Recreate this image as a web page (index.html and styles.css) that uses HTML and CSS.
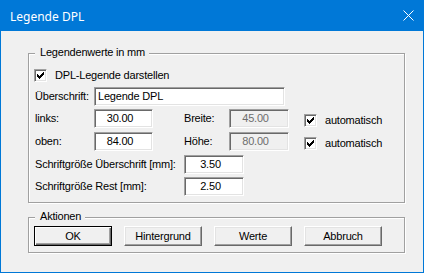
FILE: index.html
```html
<!DOCTYPE html>
<html lang="de">
<head>
<meta charset="utf-8">
<title>Legende DPL</title>
<link rel="stylesheet" href="styles.css">
</head>
<body>
<div class="window">
  <div class="titlebar">
    <span class="title">Legende DPL</span>
    <svg class="close" width="11" height="11" viewBox="0 0 11 11"><path d="M0.5 0.5 L10.5 10.5 M10.5 0.5 L0.5 10.5" stroke="#fff" stroke-width="1" fill="none"/></svg>
  </div>
  <div class="client">
    <div class="group g1">
      <span class="legend">Legendenwerte in mm</span>
      <div class="row r-check">
        <span class="cb"><svg width="7" height="7" viewBox="0 0 7 7"><path d="M0 2h1v3H0zM1 3h1v3H1zM2 4h1v3H2zM3 3h1v3H3zM4 2h1v3H4zM5 1h1v3H5zM6 0h1v3H6z" fill="#000"/></svg></span>
        <span class="cb-label">DPL-Legende darstellen</span>
      </div>
      <div class="row r-head">
        <span class="lbl l1">Überschrift:</span>
        <span class="edit e-wide">Legende DPL</span>
      </div>
      <div class="row r-links">
        <span class="lbl l1">links:</span>
        <span class="edit e-num">30.00</span>
        <span class="lbl l2">Breite:</span>
        <span class="edit e-num e-dis">45.00</span>
        <span class="auto">
          <span class="cb"><svg width="7" height="7" viewBox="0 0 7 7"><path d="M0 2h1v3H0zM1 3h1v3H1zM2 4h1v3H2zM3 3h1v3H3zM4 2h1v3H4zM5 1h1v3H5zM6 0h1v3H6z" fill="#000"/></svg></span>
          <span class="cb-label">automatisch</span>
        </span>
      </div>
      <div class="row r-oben">
        <span class="lbl l1">oben:</span>
        <span class="edit e-num">84.00</span>
        <span class="lbl l2">Höhe:</span>
        <span class="edit e-num e-dis">80.00</span>
        <span class="auto">
          <span class="cb"><svg width="7" height="7" viewBox="0 0 7 7"><path d="M0 2h1v3H0zM1 3h1v3H1zM2 4h1v3H2zM3 3h1v3H3zM4 2h1v3H4zM5 1h1v3H5zM6 0h1v3H6z" fill="#000"/></svg></span>
          <span class="cb-label">automatisch</span>
        </span>
      </div>
      <div class="row r-s1">
        <span class="lbl l3">Schriftgröße Überschrift [mm]:</span>
        <span class="edit e-num e-s">3.50</span>
      </div>
      <div class="row r-s2">
        <span class="lbl l3">Schriftgröße Rest [mm]:</span>
        <span class="edit e-num e-s">2.50</span>
      </div>
    </div>
    <div class="group g2">
      <span class="legend">Aktionen</span>
      <div class="buttons">
        <span class="btn default">OK</span>
        <span class="btn">Hintergrund</span>
        <span class="btn">Werte</span>
        <span class="btn">Abbruch</span>
      </div>
    </div>
  </div>
</div>
</body>
</html>
```
FILE: styles.css
```css
html, body {
  margin: 0;
  padding: 0;
  background: #f0f0f0;
}
body {
  font-family: "Liberation Sans", Arial, sans-serif;
  font-size: 11px;
  letter-spacing: -0.2px;
  color: #000;
}
.window {
  width: 424px;
  height: 273px;
  box-sizing: border-box;
  border: 1px solid #0078d7;
  border-top: 0;
  background: #f0f0f0;
  display: flex;
  flex-direction: column;
}
.titlebar {
  flex: none;
  height: 31px;
  background: #0078d7;
  color: #fff;
  display: flex;
  align-items: center;
  justify-content: space-between;
  padding: 0 9px;
  font-family: "Noto Sans", "Open Sans", sans-serif;
  font-size: 12px;
  letter-spacing: 0;
}
.title {
  padding-top: 1px;
}
.close {
  display: block;
}
.client {
  padding: 22px 0 0 27px;
}
.group {
  position: relative;
  width: 377px;
  box-sizing: border-box;
  border: 1px solid #a0a0a0;
  box-shadow: 1px 1px 0 #fff, inset 1px 1px 0 #fff;
}
.legend {
  position: absolute;
  top: -8px;
  left: 6px;
  padding: 0 4px 0 5px;
  line-height: 13px;
  background: #f0f0f0;
}
.g1 {
  padding: 15px 0 6px 5px;
}
.g2 {
  margin-top: 14px;
  padding: 8px 0 6px 5px;
}
.row {
  display: flex;
  align-items: center;
  height: 19px;
}
.r-check {
  height: 13px;
}
.r-head { margin-top: 5px; }
.r-links { margin-top: 3px; }
.r-oben { margin-top: 4px; }
.r-s1 { margin-top: 4px; }
.r-s2 { margin-top: 3px; }

.cb {
  flex: none;
  width: 13px;
  height: 13px;
  box-sizing: border-box;
  border: 1px solid;
  border-color: #a0a0a0 #fff #fff #a0a0a0;
  box-shadow: inset 1px 1px 0 #696969, inset -1px -1px 0 #e3e3e3;
  background: #fff;
  display: flex;
  align-items: center;
  justify-content: center;
}
.cb svg {
  display: block;
}
.cb-label {
  margin-left: 8px;
  line-height: 13px;
}
.lbl {
  flex: none;
  line-height: 19px;
}
.l1 { width: 59px; margin-left: 1px; }
.l2 { width: 45px; margin-left: 31px; }
.l3 { width: 149px; margin-left: 1px; }

.edit {
  flex: none;
  height: 19px;
  box-sizing: border-box;
  border: 1px solid;
  border-color: #a0a0a0 #fff #fff #a0a0a0;
  box-shadow: inset 1px 1px 0 #696969, inset -1px -1px 0 #e3e3e3;
  background: #fff;
  line-height: 17px;
  white-space: nowrap;
}
.e-wide {
  width: 191px;
  padding-left: 3px;
}
.e-num {
  width: 59px;
  text-align: center;
  padding-right: 7px;
}
.e-dis {
  width: 60px;
  background: #f0f0f0;
  color: #6d6d6d;
}
.e-s {
  width: 60px;
}
.auto {
  display: flex;
  align-items: center;
  align-self: flex-start;
  margin-top: 5px;
  margin-left: 15px;
}
.buttons {
  display: flex;
  gap: 12px;
}
.btn {
  width: 78px;
  height: 20px;
  box-sizing: border-box;
  border: 1px solid;
  border-color: #fff #696969 #696969 #fff;
  box-shadow: inset -1px -1px 0 #a0a0a0, inset 1px 1px 0 #e3e3e3;
  background: #f0f0f0;
  text-align: center;
  line-height: 18px;
}
.btn.default {
  border-color: #000;
  box-shadow: inset 1px 1px 0 #fff, inset -1px -1px 0 #696969, inset -2px -2px 0 #a0a0a0;
}
```
